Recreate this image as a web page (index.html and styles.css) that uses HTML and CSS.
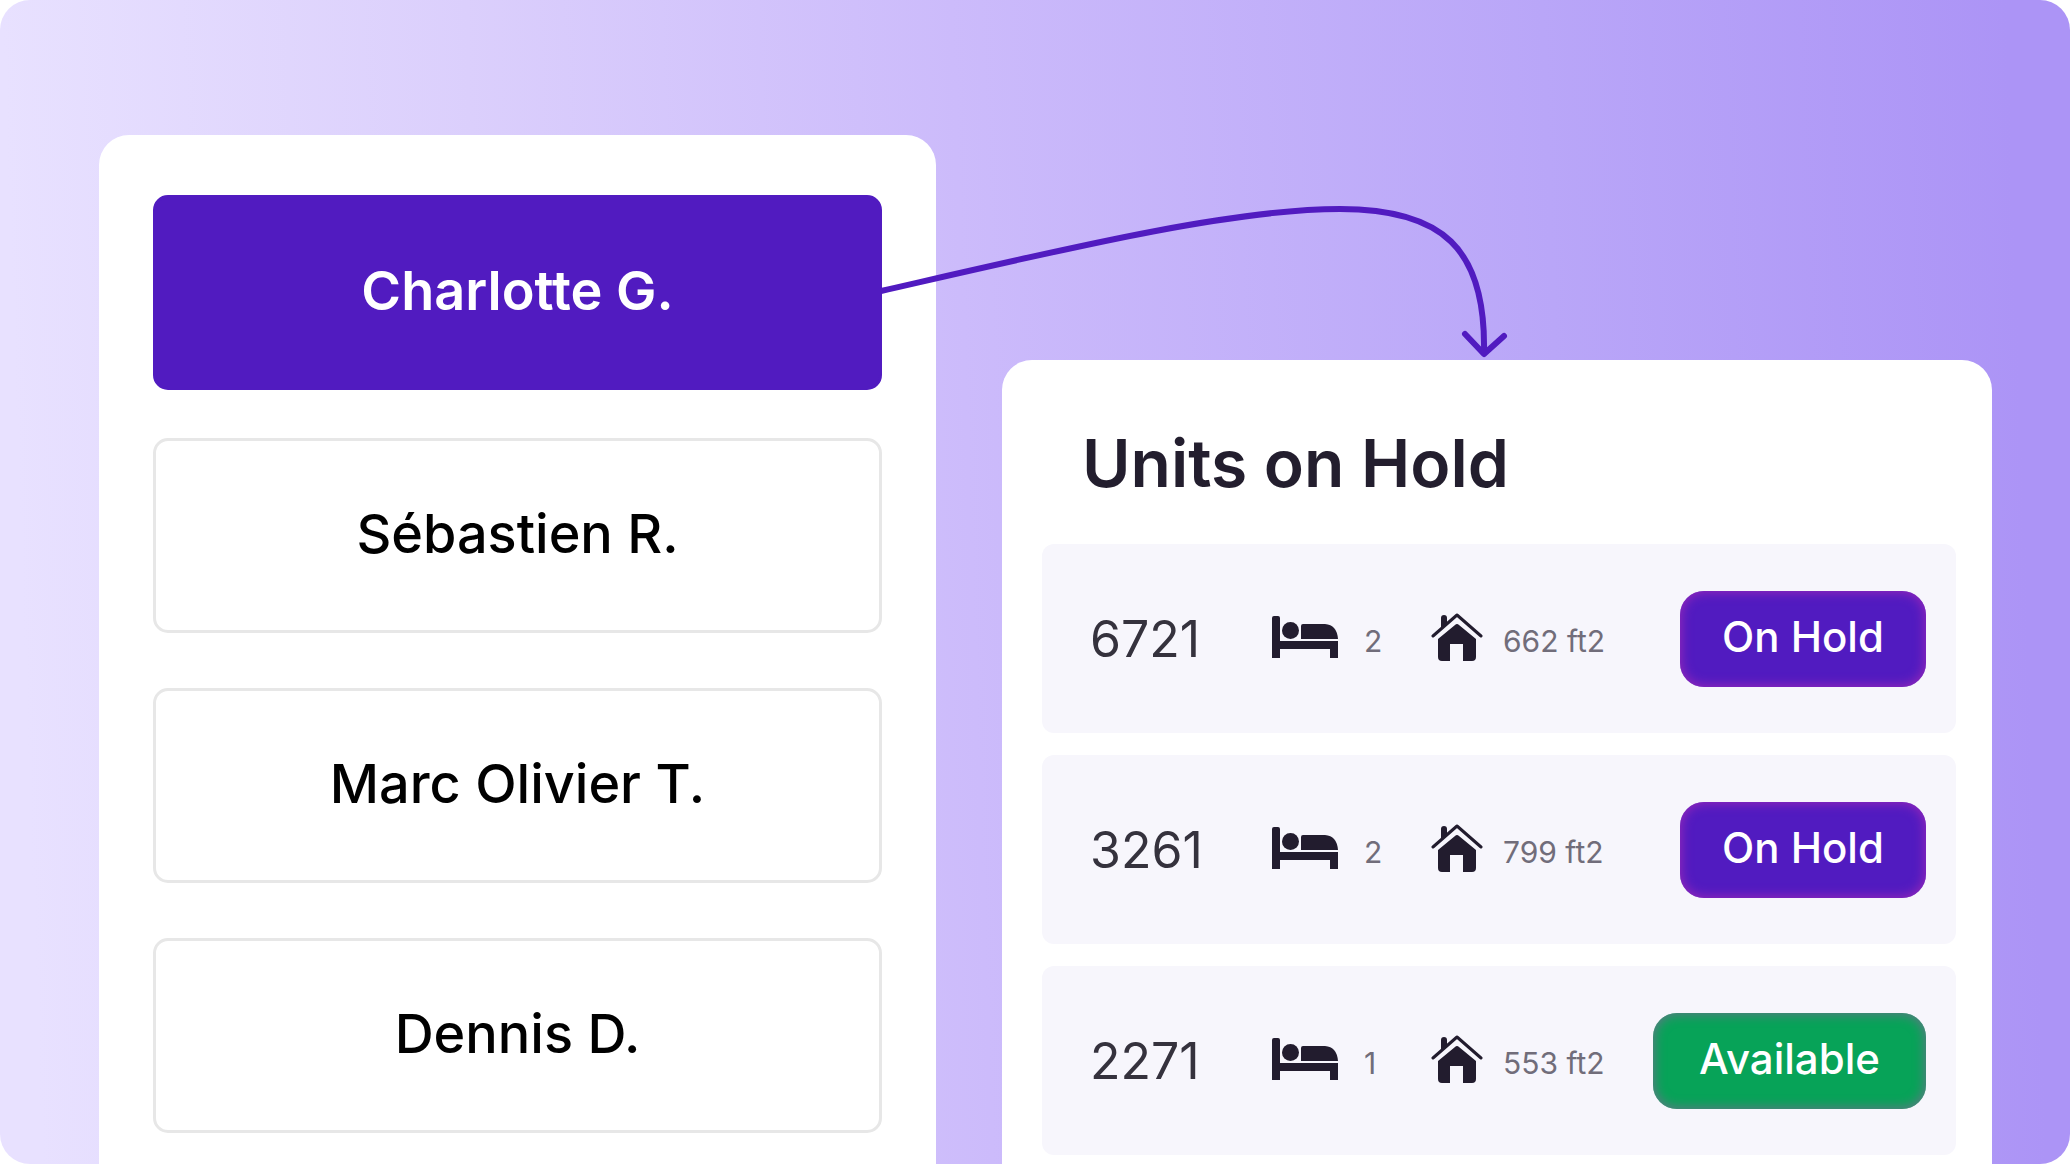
FILE: index.html
```html
<!DOCTYPE html>
<html lang="en">
  <head>
    <meta charset="UTF-8" />
    <meta name="viewport" content="width=device-width, initial-scale=1.0" />
    <title>Units on Hold</title>
    <link rel="stylesheet" href="styles.css">
  </head>
  <body>
    <!-- shared icons -->
    <svg class="sprite" aria-hidden="true">
      <symbol id="bed" viewBox="0 0 66 42">
        <path d="M0 2Q0 0 2 0H6Q8 0 8 2V25H66V42H58V33H8V42H0Z" />
        <circle cx="18.500" cy="14.500" r="8.500" />
        <path d="M29 10Q29 8 31 8H53Q65 9 66 23H29Z" />
      </symbol>
      <symbol id="house" viewBox="0 0 52 48">
        <path d="M10 15V5Q10 2 13 2T16 5V10Z" />
        <path d="M2 23L26 2L50 23" fill="none" stroke="currentColor" stroke-width="3" stroke-linecap="round" stroke-linejoin="round" />
        <path d="M24 12Q26 10 28 12L45 26V44Q45 48 41 48H32V31H19V48H11Q7 48 7 44V26Z" />
      </symbol>
    </svg>

    <main class="stage">
      <section class="card clients">
        <button class="client active">Charlotte G.</button>
        <div class="client_list">
          <button class="client">Sébastien R.</button>
          <button class="client">Marc Olivier T.</button>
          <button class="client">Dennis D.</button>
        </div>
      </section>

      <section class="card units">
        <h2 class="title">Units on Hold</h2>
        <ul class="unit_list">
          <li class="unit">
            <span class="number">6721</span>
            <svg class="bed"><use href="#bed" /></svg>
            <span class="info">2</span>
            <svg class="house"><use href="#house" /></svg>
            <span class="info">662 ft2</span>
            <button class="status hold">On Hold</button>
          </li>
          <li class="unit">
            <span class="number">3261</span>
            <svg class="bed"><use href="#bed" /></svg>
            <span class="info">2</span>
            <svg class="house"><use href="#house" /></svg>
            <span class="info">799 ft2</span>
            <button class="status hold">On Hold</button>
          </li>
          <li class="unit">
            <span class="number">2271</span>
            <svg class="bed"><use href="#bed" /></svg>
            <span class="info">1</span>
            <svg class="house"><use href="#house" /></svg>
            <span class="info">553 ft2</span>
            <button class="status available">Available</button>
          </li>
        </ul>
      </section>

      <svg class="arrow" viewBox="0 0 2070 1164" aria-hidden="true">
        <path d="M881 291C1060 250 1230 209 1340 209C1442 209 1486 248 1484 352" />
        <path d="M1465 334L1484 354L1504 336" stroke-linecap="round" stroke-linejoin="round" />
      </svg>
    </main>
  </body>
</html>
```
FILE: styles.css
```css
* {
  margin: 0;
  padding: 0;
  box-sizing: border-box;
}
body {
  background-color: white;
  font-family: Inter, "Liberation Sans", sans-serif;
}
button {
  border: none;
  font-family: inherit;
  cursor: pointer;
}
.sprite {
  position: absolute;
  width: 0;
  height: 0;
}
.stage {
  position: relative;
  display: grid;
  grid-template-columns: 837fr 990fr;
  column-gap: 66px;
  min-height: 100vh;
  padding: 135px 78px 0 99px;
  border-radius: 30px;
  background: linear-gradient(88deg, #e8e1ff 2%, #dbcffc 24%, #ccbbfb 47%, #b9a6f8 75%, #ac94f6 97%);
  overflow: hidden;
}
.card {
  background-color: white;
  border-radius: 30px 30px 0 0;
}
.clients {
  padding: 60px 54px 30px;
}
.client {
  display: block;
  width: 100%;
  height: 195px;
  padding-bottom: 4px;
  border: 3px solid #e7e7e7;
  border-radius: 15px;
  background-color: white;
  color: black;
  font-size: 54px;
  font-weight: 500;
}
.active {
  border-color: #511bc0;
  background-color: #511bc0;
  color: white;
  font-weight: 600;
}
.client_list {
  display: grid;
  gap: 55px;
  margin-top: 48px;
}
.units {
  margin-top: 225px;
  padding: 71px 36px 9px 40px;
}
.title {
  margin: 0 0 49px 40px;
  color: #231e2e;
  font-size: 66px;
  line-height: 64px;
  font-weight: 600;
}
.unit_list {
  display: grid;
  gap: 22px;
  list-style: none;
}
.unit {
  display: grid;
  grid-template-columns: 182px 92px 67px 72px 1fr auto;
  align-items: center;
  height: 189px;
  padding: 0 30px 0 48px;
  border-radius: 12px;
  background-color: #f7f6fc;
  color: #221c2e;
}
.unit svg {
  fill: currentColor;
}
.bed {
  width: 66px;
  height: 42px;
  margin-bottom: 4px;
}
.house {
  width: 52px;
  height: 48px;
  margin-bottom: 4px;
}
.number {
  color: #35323d;
  font-size: 50px;
}
.info {
  color: #716d7a;
  font-size: 30px;
  padding-top: 4px;
}
.status {
  height: 96px;
  padding-bottom: 4px;
  border-radius: 24px;
  color: white;
  font-size: 42px;
  font-weight: 500;
}
.hold {
  width: 246px;
  background-color: #511bc0;
  box-shadow: inset 0 0 12px 1px #9a28b8;
}
.available {
  width: 273px;
  background-color: #07a358;
  box-shadow: inset 0 0 12px 1px #68748a;
}
.arrow {
  position: absolute;
  top: 0;
  left: 0;
  width: 100%;
  fill: none;
  stroke: #511bc0;
  stroke-width: 6;
  pointer-events: none;
}
```
